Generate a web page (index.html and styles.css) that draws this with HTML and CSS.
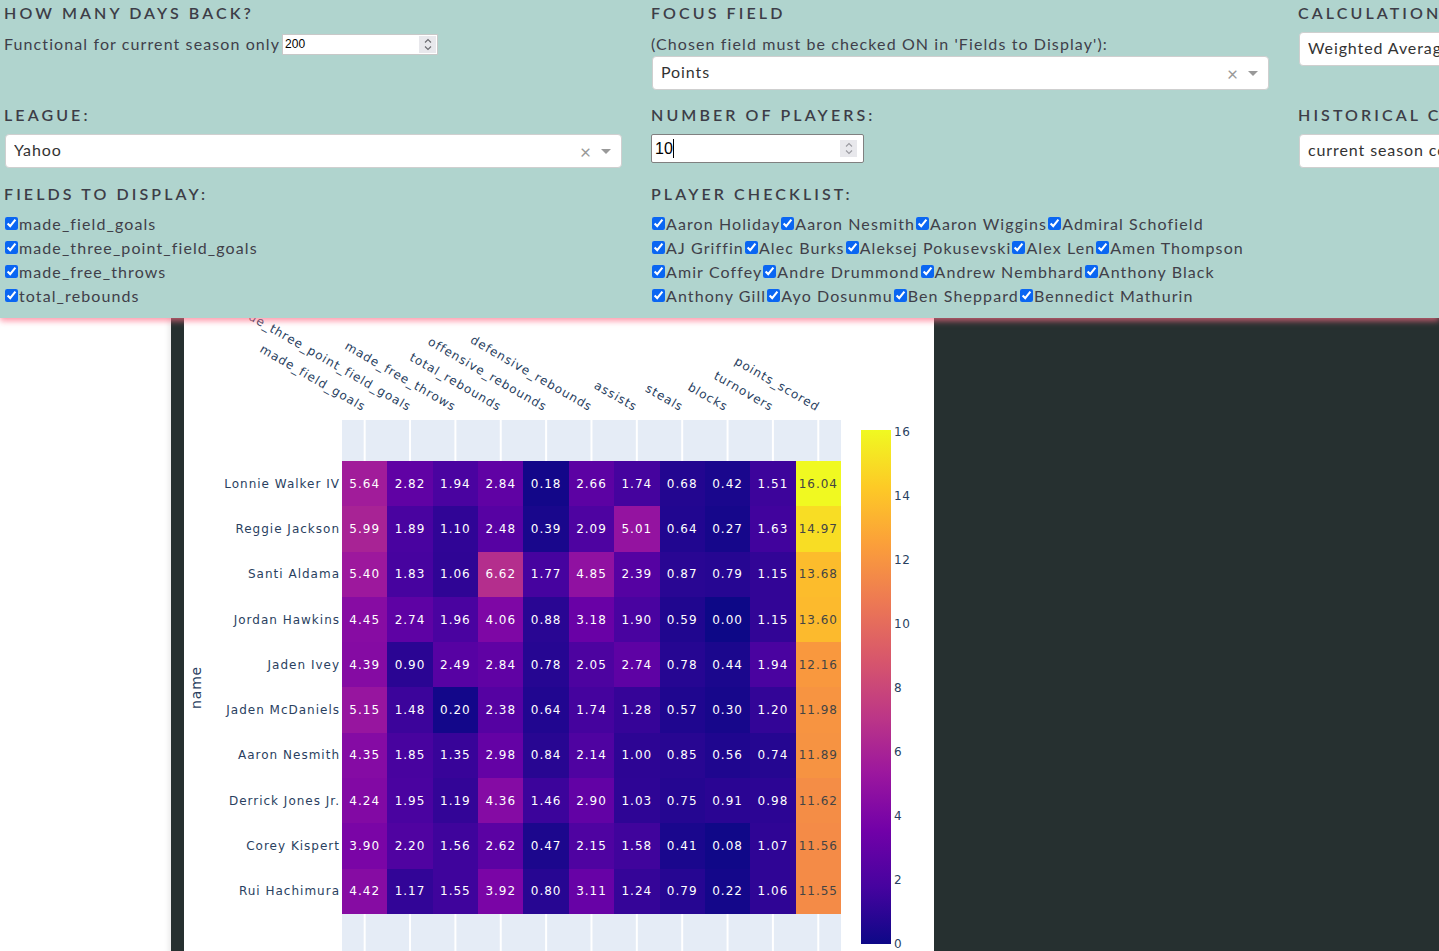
FILE: index.html
```html
<!DOCTYPE html>
<html lang="en">
<head>
<meta charset="utf-8">
<title>Player heatmap</title>
<link rel="stylesheet" href="styles.css">
</head>
<body>
<section class="controls">
  <div class="ctl">
    <h3 class="hd">How many days back?</h3>
    <div class="inline-row">
      <span class="txt">Functional for current season only</span>
      <div class="num num-sm">
        <input class="num-in" type="text" value="200">
        <span class="spin"><svg width="8" height="13" viewBox="0 0 8 13"><path d="M1 4.5 L4 1.5 L7 4.5 M1 8.5 L4 11.5 L7 8.5" fill="none" stroke="#6b6b70" stroke-width="1.1"/></svg></span>
      </div>
    </div>
  </div>
  <div class="ctl">
    <h3 class="hd">Focus Field</h3>
    <div class="txt sub">(Chosen field must be checked ON in 'Fields to Display'):</div>
    <div class="dd dd-tight"><span class="val">Points</span><span class="clear">×</span><span class="arrow"></span></div>
  </div>
  <div class="ctl">
    <h3 class="hd">Calculation Method:</h3>
    <div class="dd"><span class="val">Weighted Average</span><span class="clear">×</span><span class="arrow"></span></div>
  </div>

  <div class="ctl">
    <h3 class="hd">League:</h3>
    <div class="dd"><span class="val">Yahoo</span><span class="clear">×</span><span class="arrow"></span></div>
  </div>
  <div class="ctl">
    <h3 class="hd">Number of players:</h3>
    <div class="num num-lg">
      <input class="num-in" type="text" value="10"><span class="caret"></span>
      <span class="spin"><svg width="8" height="13" viewBox="0 0 8 13"><path d="M1 4.5 L4 1.5 L7 4.5 M1 8.5 L4 11.5 L7 8.5" fill="none" stroke="#9a9aa0" stroke-width="1.1"/></svg></span>
    </div>
  </div>
  <div class="ctl">
    <h3 class="hd">Historical Comparison:</h3>
    <div class="dd"><span class="val">current season comparison</span><span class="clear">×</span><span class="arrow"></span></div>
  </div>

  <div class="ctl">
    <h3 class="hd">Fields to display:</h3>
    <div class="cl">
      <div class="cl-row"><label class="ck"><input type="checkbox" checked>made_field_goals</label></div>
      <div class="cl-row"><label class="ck"><input type="checkbox" checked>made_three_point_field_goals</label></div>
      <div class="cl-row"><label class="ck"><input type="checkbox" checked>made_free_throws</label></div>
      <div class="cl-row"><label class="ck"><input type="checkbox" checked>total_rebounds</label></div>
    </div>
  </div>
  <div class="ctl">
    <h3 class="hd">Player checklist:</h3>
    <div class="cl">
      <div class="cl-row">
        <label class="ck"><input type="checkbox" checked>Aaron Holiday</label>
        <label class="ck"><input type="checkbox" checked>Aaron Nesmith</label>
        <label class="ck"><input type="checkbox" checked>Aaron Wiggins</label>
        <label class="ck"><input type="checkbox" checked>Admiral Schofield</label>
      </div>
      <div class="cl-row">
        <label class="ck"><input type="checkbox" checked>AJ Griffin</label>
        <label class="ck"><input type="checkbox" checked>Alec Burks</label>
        <label class="ck"><input type="checkbox" checked>Aleksej Pokusevski</label>
        <label class="ck"><input type="checkbox" checked>Alex Len</label>
        <label class="ck"><input type="checkbox" checked>Amen Thompson</label>
      </div>
      <div class="cl-row">
        <label class="ck"><input type="checkbox" checked>Amir Coffey</label>
        <label class="ck"><input type="checkbox" checked>Andre Drummond</label>
        <label class="ck"><input type="checkbox" checked>Andrew Nembhard</label>
        <label class="ck"><input type="checkbox" checked>Anthony Black</label>
      </div>
      <div class="cl-row">
        <label class="ck"><input type="checkbox" checked>Anthony Gill</label>
        <label class="ck"><input type="checkbox" checked>Ayo Dosunmu</label>
        <label class="ck"><input type="checkbox" checked>Ben Sheppard</label>
        <label class="ck"><input type="checkbox" checked>Bennedict Mathurin</label>
      </div>
    </div>
  </div>
  <div class="ctl"></div>
</section>

<main class="main">
  <aside class="side"></aside>
  <div class="stage">
    <div class="plot">
      <div class="ytitle"><div class="ytitle-inner"><span>name</span></div></div>
      <div class="rowlabels">
        <div class="rl-grid">
          <div>Lonnie Walker IV</div>
          <div>Reggie Jackson</div>
          <div>Santi Aldama</div>
          <div>Jordan Hawkins</div>
          <div>Jaden Ivey</div>
          <div>Jaden McDaniels</div>
          <div>Aaron Nesmith</div>
          <div>Derrick Jones Jr.</div>
          <div>Corey Kispert</div>
          <div>Rui Hachimura</div>
        </div>
      </div>
      <div class="plotcol">
        <div class="xlabels">
          <div class="xl"><span>made_field_goals</span></div>
          <div class="xl"><span>made_three_point_field_goals</span></div>
          <div class="xl"><span>made_free_throws</span></div>
          <div class="xl"><span>total_rebounds</span></div>
          <div class="xl"><span>offensive_rebounds</span></div>
          <div class="xl"><span>defensive_rebounds</span></div>
          <div class="xl"><span>assists</span></div>
          <div class="xl"><span>steals</span></div>
          <div class="xl"><span>blocks</span></div>
          <div class="xl"><span>turnovers</span></div>
          <div class="xl"><span>points_scored</span></div>
        </div>
        <div class="plotbg">
          <div class="grid">
            <div class="cell">5.64</div><div class="cell">2.82</div><div class="cell">1.94</div><div class="cell">2.84</div><div class="cell">0.18</div><div class="cell">2.66</div><div class="cell">1.74</div><div class="cell">0.68</div><div class="cell">0.42</div><div class="cell">1.51</div><div class="cell">16.04</div>
            <div class="cell">5.99</div><div class="cell">1.89</div><div class="cell">1.10</div><div class="cell">2.48</div><div class="cell">0.39</div><div class="cell">2.09</div><div class="cell">5.01</div><div class="cell">0.64</div><div class="cell">0.27</div><div class="cell">1.63</div><div class="cell">14.97</div>
            <div class="cell">5.40</div><div class="cell">1.83</div><div class="cell">1.06</div><div class="cell">6.62</div><div class="cell">1.77</div><div class="cell">4.85</div><div class="cell">2.39</div><div class="cell">0.87</div><div class="cell">0.79</div><div class="cell">1.15</div><div class="cell">13.68</div>
            <div class="cell">4.45</div><div class="cell">2.74</div><div class="cell">1.96</div><div class="cell">4.06</div><div class="cell">0.88</div><div class="cell">3.18</div><div class="cell">1.90</div><div class="cell">0.59</div><div class="cell">0.00</div><div class="cell">1.15</div><div class="cell">13.60</div>
            <div class="cell">4.39</div><div class="cell">0.90</div><div class="cell">2.49</div><div class="cell">2.84</div><div class="cell">0.78</div><div class="cell">2.05</div><div class="cell">2.74</div><div class="cell">0.78</div><div class="cell">0.44</div><div class="cell">1.94</div><div class="cell">12.16</div>
            <div class="cell">5.15</div><div class="cell">1.48</div><div class="cell">0.20</div><div class="cell">2.38</div><div class="cell">0.64</div><div class="cell">1.74</div><div class="cell">1.28</div><div class="cell">0.57</div><div class="cell">0.30</div><div class="cell">1.20</div><div class="cell">11.98</div>
            <div class="cell">4.35</div><div class="cell">1.85</div><div class="cell">1.35</div><div class="cell">2.98</div><div class="cell">0.84</div><div class="cell">2.14</div><div class="cell">1.00</div><div class="cell">0.85</div><div class="cell">0.56</div><div class="cell">0.74</div><div class="cell">11.89</div>
            <div class="cell">4.24</div><div class="cell">1.95</div><div class="cell">1.19</div><div class="cell">4.36</div><div class="cell">1.46</div><div class="cell">2.90</div><div class="cell">1.03</div><div class="cell">0.75</div><div class="cell">0.91</div><div class="cell">0.98</div><div class="cell">11.62</div>
            <div class="cell">3.90</div><div class="cell">2.20</div><div class="cell">1.56</div><div class="cell">2.62</div><div class="cell">0.47</div><div class="cell">2.15</div><div class="cell">1.58</div><div class="cell">0.41</div><div class="cell">0.08</div><div class="cell">1.07</div><div class="cell">11.56</div>
            <div class="cell">4.42</div><div class="cell">1.17</div><div class="cell">1.55</div><div class="cell">3.92</div><div class="cell">0.80</div><div class="cell">3.11</div><div class="cell">1.24</div><div class="cell">0.79</div><div class="cell">0.22</div><div class="cell">1.06</div><div class="cell">11.55</div>
          </div>
        </div>
      </div>
      <div class="cbar"><div class="cbar-bar"></div></div>
      <div class="cbticks">
        <span>16</span><span>14</span><span>12</span><span>10</span><span>8</span><span>6</span><span>4</span><span>2</span><span>0</span>
      </div>
    </div>
  </div>
</main>
<script src="script.js"></script>
</body>
</html>
```

FILE: styles.css
```css
* { box-sizing: border-box; }
html, body { margin: 0; height: 100%; overflow: hidden; }
body {
  font-family: Lato, "Open Sans", sans-serif;
  background: #263030;
  color: #3f3f4a;
}

/* ---------- control panel ---------- */
.controls {
  position: relative;
  z-index: 2;
  height: 318px;
  background: #b0d4ce;
  box-shadow: 0 3px 6px rgba(255, 110, 135, 0.7);
  display: grid;
  grid-template-columns: 617px 617px 617px;
  grid-template-rows: 102px 79px 137px;
  column-gap: 30px;
  padding-left: 5px;
  overflow: hidden;
}
.ctl { min-width: 0; }
.hd {
  margin: 0 0 0 -1px;
  font-size: 16px;
  line-height: 26px;
  font-weight: 600;
  letter-spacing: 3.1px;
  text-transform: uppercase;
  white-space: nowrap;
  color: #3d3d47;
}
.txt {
  font-size: 16px;
  line-height: 24px;
  letter-spacing: 1.1px;
  white-space: nowrap;
}
.sub { margin-top: 6px; margin-left: -1px; }
.inline-row {
  display: flex;
  align-items: center;
  margin-top: 6px;
  margin-left: -1px;
}
.inline-row .txt { margin-right: 2px; }

/* dropdowns */
.dd {
  margin-top: 6px;
  height: 34px;
  background: #fff;
  border: 1px solid #cfcfcf;
  border-radius: 4px;
  display: flex;
  align-items: center;
  padding: 0 10px 3px 8px;
  font-size: 16px;
  letter-spacing: 0.9px;
  color: #333;
}
.dd-tight { margin-top: 0; }
.dd .val { flex: 1; white-space: nowrap; overflow: hidden; }
.dd .clear { color: #999; font-size: 19px; line-height: 1; margin-right: 9px; margin-top: 3px; }
.dd .arrow {
  width: 0; height: 0;
  margin-top: 3px;
  border-left: 5px solid transparent;
  border-right: 5px solid transparent;
  border-top: 5px solid #999;
}

/* number inputs */
.num {
  display: flex;
  align-items: center;
  background: #fff;
}
.num-in {
  border: 0;
  outline: 0;
  padding: 0;
  margin: 0;
  flex: 1;
  min-width: 0;
  background: transparent;
  color: #000;
  font-family: "Liberation Sans", Arial, sans-serif;
}
.num-sm {
  width: 156px;
  height: 21px;
  border: 1px solid #c8c8c8;
  padding: 0 1px 0 2px;
}
.num-sm .num-in { font-size: 12px; }
.num-lg {
  margin-top: 6px;
  margin-left: -1px;
  width: 213px;
  height: 29px;
  border: 1px solid #808080;
  border-radius: 2px;
  padding: 0 6px 0 3px;
}
.num-lg .num-in { font-size: 16px; flex: 0 0 18px; }
.caret { width: 1px; height: 19px; background: #000; flex: none; }
.num-lg .caret + .spin { margin-left: auto; }
.spin {
  flex: none;
  width: 17px;
  height: 17px;
  background: #e8e8ec;
  display: flex;
  align-items: center;
  justify-content: center;
}

/* checklists */
.cl { margin-top: 4px; margin-left: -1px; }
.cl-row {
  display: flex;
  height: 24px;
  align-items: center;
  white-space: nowrap;
}
.ck {
  display: inline-flex;
  align-items: center;
  font-size: 16px;
  letter-spacing: 1.1px;
  color: #404049;
}
.ck input {
  margin: 1px 1px 0 1px;
  width: 13px;
  height: 13px;
  accent-color: #0a66f2;
}

/* ---------- main area ---------- */
.main {
  display: flex;
  height: calc(100% - 318px);
}
.side {
  width: 171px;
  flex: none;
  background: #fff;
  box-shadow: inset -7px 0 6px -6px rgba(0, 0, 0, 0.12);
}
.stage {
  flex: 1;
  padding-left: 13px;
  background: #263030;
}
.plot {
  width: 750px;
  height: 100%;
  background: #fff;
  display: flex;
  overflow: hidden;
  font-family: "DejaVu Sans", Verdana, sans-serif;
  font-size: 12px;
  letter-spacing: 1px;
  color: #2a3f5f;
}

.ytitle { width: 24px; flex: none; padding-top: 143px; }
.ytitle-inner {
  height: 453px;
  display: flex;
  align-items: center;
  justify-content: center;
}
.ytitle-inner span {
  writing-mode: vertical-rl;
  transform: rotate(180deg);
  font-size: 14px;
  letter-spacing: 0.8px;
}

.rowlabels { width: 134px; flex: none; padding-top: 143px; padding-right: 2px; }
.rl-grid {
  height: 453px;
  display: grid;
  grid-template-rows: repeat(10, 1fr);
}
.rl-grid div {
  display: flex;
  align-items: center;
  justify-content: flex-end;
  white-space: nowrap;
}

.plotcol { width: 499px; flex: none; display: flex; flex-direction: column; }
.xlabels { height: 102px; flex: none; display: flex; }
.xl { flex: 1; position: relative; }
.xl span {
  position: absolute;
  right: 50%;
  top: 83px;
  line-height: 14px;
  white-space: nowrap;
  transform-origin: 100% 50%;
  transform: rotate(30deg);
}
.plotbg {
  flex: 1;
  padding-top: 41px;
  background-color: #e5ecf6;
  background-image: linear-gradient(90deg, transparent calc(50% - 1px), #fff calc(50% - 1px), #fff calc(50% + 1px), transparent calc(50% + 1px));
  background-size: calc(100% / 11) 100%;
}
.grid {
  height: 453px;
  display: grid;
  grid-template-columns: repeat(11, 1fr);
  grid-template-rows: repeat(10, 1fr);
}
.cell {
  display: flex;
  align-items: center;
  justify-content: center;
  color: #fff;
  white-space: nowrap;
  background: #0d0887;
}
.cell.light { color: #444; }

.cbar { flex: none; margin-left: 20px; padding-top: 112px; }
.cbar-bar {
  width: 30px;
  height: 514px;
  background: linear-gradient(to top, #0d0887 0%, #46039f 11.11%, #7201a8 22.22%, #9c179e 33.33%, #bd3786 44.44%, #d8576b 55.56%, #ed7953 66.67%, #fb9f3a 77.78%, #fdca26 88.89%, #f0f921 100%);
}
.cbticks {
  flex: none;
  margin-left: 3px;
  padding-top: 107px;
  display: flex;
  flex-direction: column;
  justify-content: space-between;
  letter-spacing: 0.6px;
}
.cbticks span { line-height: 14px; }
```

FILE: script.js
```js
(function () {
  var stops = ['#0d0887', '#46039f', '#7201a8', '#9c179e', '#bd3786', '#d8576b', '#ed7953', '#fb9f3a', '#fdca26', '#f0f921'];
  var max = 16.04;
  function rgb(h) { return [1, 3, 5].map(function (i) { return parseInt(h.substr(i, 2), 16); }); }
  var cells = document.querySelectorAll('.cell');
  for (var n = 0; n < cells.length; n++) {
    var c = cells[n];
    var v = parseFloat(c.textContent);
    var t = Math.min(Math.max(v / max, 0), 1) * 9;
    var i = Math.min(Math.floor(t), 8);
    var f = t - i;
    var a = rgb(stops[i]), b = rgb(stops[i + 1]);
    var col = a.map(function (x, k) { return Math.round(x + (b[k] - x) * f); });
    c.style.background = 'rgb(' + col.join(',') + ')';
    var lum = (0.299 * col[0] + 0.587 * col[1] + 0.114 * col[2]) / 255;
    if (lum > 0.55) c.classList.add('light');
  }
})();
```
